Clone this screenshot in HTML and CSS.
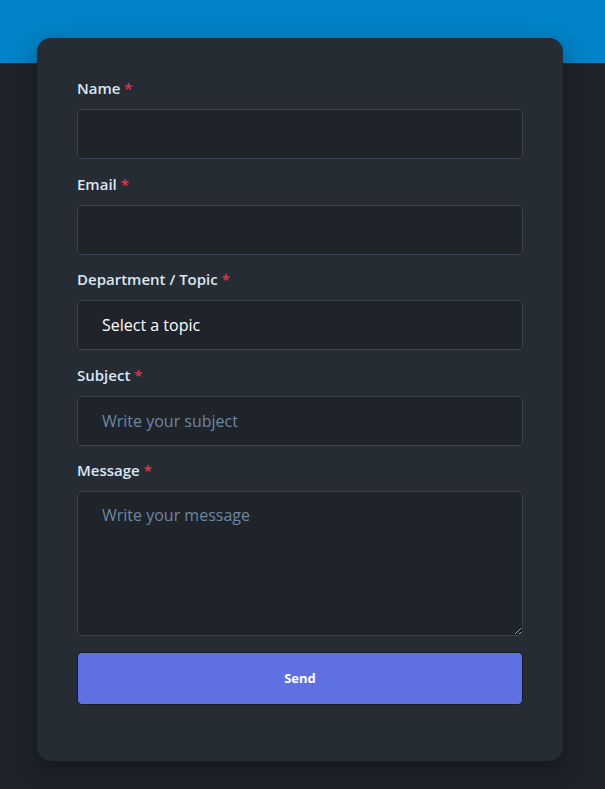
FILE: index.html
```html
<!DOCTYPE html>
<html lang="en">
<head>
    <meta charset="UTF-8">
    <meta name="viewport" content="width=device-width, initial-scale=1.0">
    <title>Contact</title>
    <link rel="stylesheet" href="styles.css">
</head>
<body>

<div class="top-bar"></div>

<div class="page">
    <div class="card">
        <form id="contactForm">
            <div class="field">
                <label for="name">Name <span class="req">*</span></label>
                <input type="text" id="name" name="name" required>
            </div>

            <div class="field">
                <label for="email">Email <span class="req">*</span></label>
                <input type="email" id="email" name="email" required>
            </div>

            <div class="field">
                <label for="topic">Department / Topic <span class="req">*</span></label>
                <select id="topic" name="topic" required>
                    <option value="">Select a topic</option>
                    <option value="sales">Sales</option>
                    <option value="support">Support</option>
                </select>
            </div>

            <div class="field">
                <label for="subject">Subject <span class="req">*</span></label>
                <input type="text" id="subject" name="subject" placeholder="Write your subject" required>
            </div>

            <div class="field">
                <label for="message">Message <span class="req">*</span></label>
                <textarea id="message" name="message" placeholder="Write your message" required></textarea>
            </div>

            <button type="submit">Send</button>
        </form>
    </div>
</div>

</body>
</html>
```

FILE: styles.css
```css
body {
    font-family: 'Open Sans', 'Noto Sans', sans-serif;
    background-color: #1f2329;
    margin: 0;
    padding: 0;
    color: #dbe6f5;
}
.top-bar {
    background-color: #0083c8;
    height: 63px;
}
.page {
    padding: 0 42px 29px 37px;
    margin-top: -25px;
}
.card {
    background-color: #262c34;
    border-radius: 14px;
    box-shadow: 0 8px 24px rgba(0, 0, 0, 0.35);
    padding: 39px 40px 56px 40px;
}
.field {
    margin-bottom: 13.5px;
}
label {
    display: block;
    font-size: 15px;
    font-weight: 600;
    line-height: 22px;
    margin-bottom: 10px;
    color: #dbe6f5;
}
.req {
    color: #e5354c;
}
input,
select,
textarea {
    box-sizing: border-box;
    width: 100%;
    height: 50px;
    background-color: #1f232a;
    border: 1px solid #39434f;
    border-radius: 5px;
    padding: 0 24px;
    font-family: inherit;
    font-size: 16px;
    color: #ffffff;
    outline: none;
    display: block;
}
select {
    appearance: none;
    -webkit-appearance: none;
}
input::placeholder,
textarea::placeholder {
    color: #6d87a0;
}
textarea {
    height: 145px;
    padding: 12px 24px;
    resize: vertical;
}
button {
    box-sizing: border-box;
    width: 100%;
    height: 53px;
    margin-top: 2px;
    background-color: #5f70e3;
    color: #ffffff;
    border: 1px solid #1a1d24;
    border-radius: 5px;
    font-family: inherit;
    font-size: 13px;
    font-weight: 700;
    cursor: pointer;
}
button:hover {
    background-color: #5060d0;
}
```
